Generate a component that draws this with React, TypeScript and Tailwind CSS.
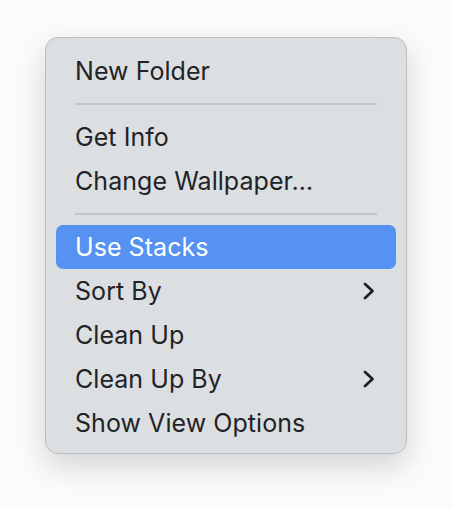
type Item =
  | { kind: "item"; label: string; submenu?: boolean; active?: boolean }
  | { kind: "sep" };

const items: Item[] = [
  { kind: "item", label: "New Folder" },
  { kind: "sep" },
  { kind: "item", label: "Get Info" },
  { kind: "item", label: "Change Wallpaper…" },
  { kind: "sep" },
  { kind: "item", label: "Use Stacks", active: true },
  { kind: "item", label: "Sort By", submenu: true },
  { kind: "item", label: "Clean Up" },
  { kind: "item", label: "Clean Up By", submenu: true },
  { kind: "item", label: "Show View Options" },
];

const Chevron = () => (
  <svg width="12" height="18" viewBox="0 0 12 18" fill="none" className="text-[#1f2023]">
    <path d="M2 2 L9.5 9 L2 16" stroke="currentColor" strokeWidth="2.8" strokeLinecap="round" strokeLinejoin="round" />
  </svg>
);

const MenuRow = ({ label, submenu, active }: { label: string; submenu?: boolean; active?: boolean }) => (
  <div
    className={`flex items-center h-[44px] pl-[19px] pr-[21px] rounded-[7px] ${
      active ? "bg-[#5592f1] text-white" : "text-[#222326]"
    }`}
  >
    <span className="flex-1 text-[25px] leading-none tracking-[0.05px]">{label}</span>
    {submenu && <Chevron />}
  </div>
);

export default function App() {
  return (
    <div
      className="w-[452px] h-[508px] bg-[#fbfbfb] pt-[37px] pl-[45px]"
      style={{ fontFamily: "Inter, 'Noto Sans', sans-serif" }}
    >
      <div className="w-[362px] h-[417px] bg-[#dcdfe2] border border-[#bdbec0] rounded-[13px] px-[10px] pt-[11px] pb-[8px] shadow-[0_12px_30px_rgba(0,0,0,0.16)] flex flex-col">
        {items.map((it, i) =>
          it.kind === "sep" ? (
            <div key={i} className="h-[22px] flex items-center px-[19px]">
              <div className="h-[2px] w-full bg-[#c3c5c8]" />
            </div>
          ) : (
            <MenuRow key={i} label={it.label} submenu={it.submenu} active={it.active} />
          ),
        )}
      </div>
    </div>
  );
}
